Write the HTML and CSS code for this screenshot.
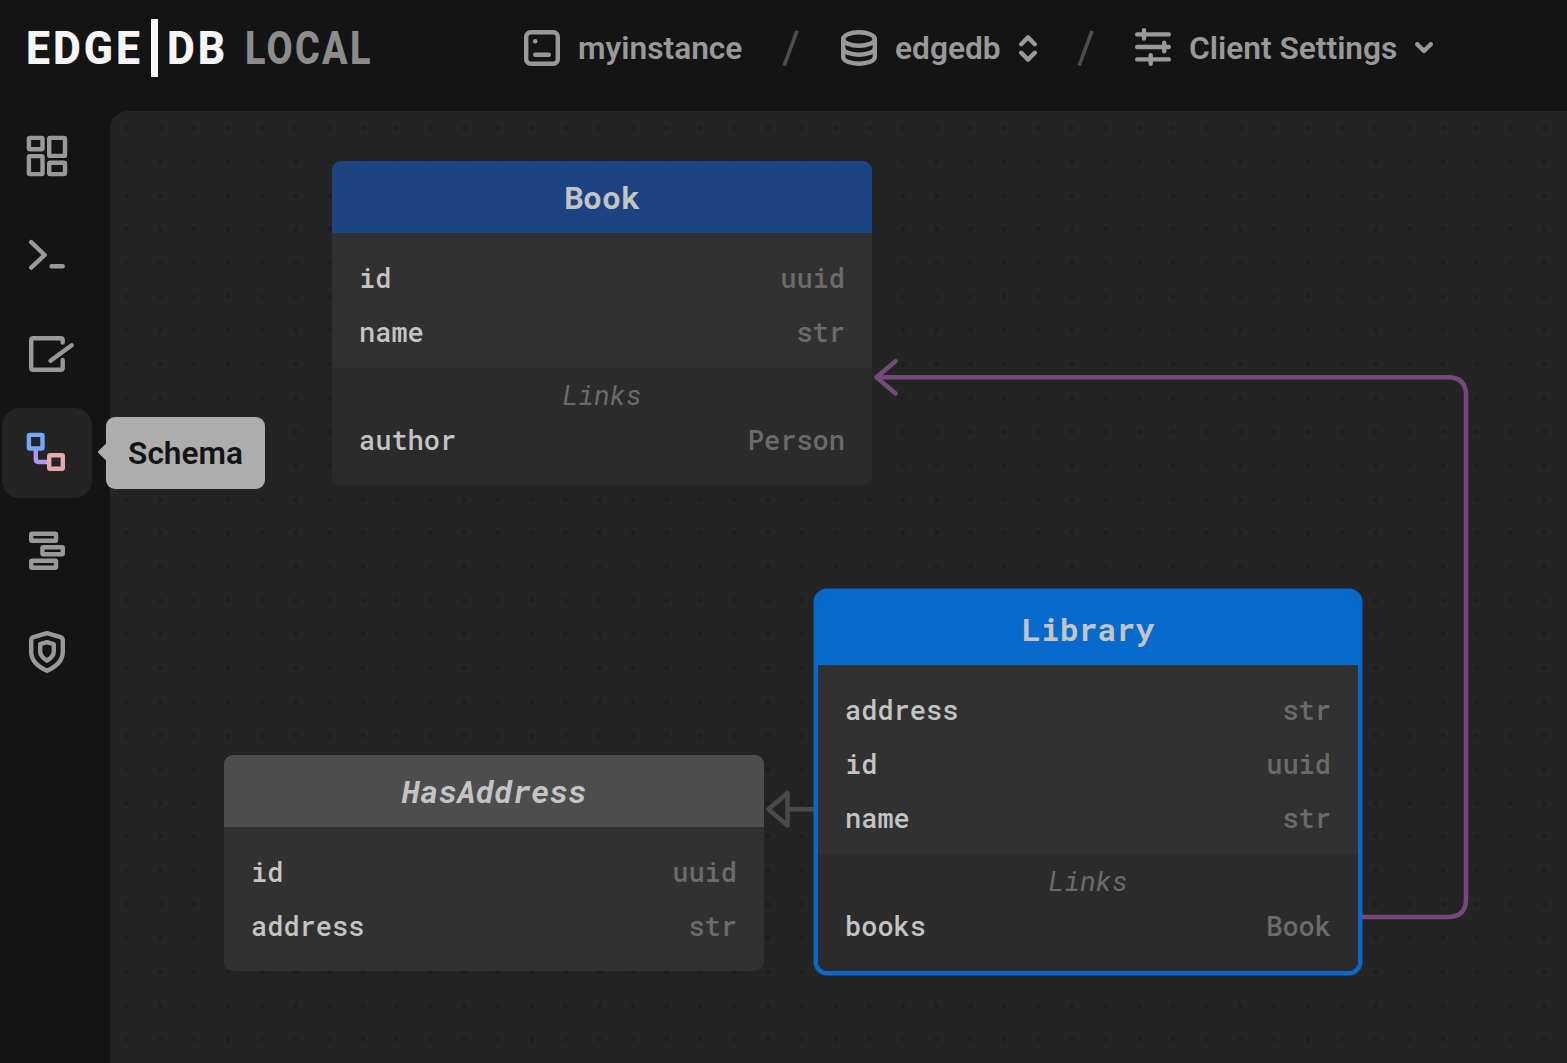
FILE: index.html
```html
<!DOCTYPE html>
<html lang="en">
<head>
<meta charset="utf-8">
<title>EdgeDB Local</title>
<link rel="stylesheet" href="styles.css">
</head>
<body>
<header class="topbar">
  <div class="logo">
    <span class="logo-word logo-edge">EDGE</span>
    <span class="logo-bar"></span>
    <span class="logo-word logo-db">DB</span>
    <span class="logo-word logo-local">LOCAL</span>
  </div>
  <nav class="crumbs">
    <div class="crumb crumb-instance">
      <svg class="icon" width="36" height="36" viewBox="0 0 36 36"><rect x="2.2" y="2.2" width="31.6" height="31.6" rx="4.5"/><circle class="solid" cx="11.2" cy="11.2" r="2.3"/><path d="M11.2 24.8H24.8"/></svg>
      <span class="crumb-label">myinstance</span>
    </div>
    <svg class="slash" width="18" height="36" viewBox="0 0 18 36"><path d="M2.2 35.5L15 .8"/></svg>
    <div class="crumb crumb-database">
      <svg class="icon" width="36" height="36" viewBox="0 0 36 36"><ellipse cx="18" cy="9" rx="15.8" ry="6.8"/><path d="M2.2 9V27C2.2 30.8 9.3 33.8 18 33.8S33.8 30.8 33.8 27V9M2.2 18C2.2 21.8 9.3 24.8 18 24.8S33.8 21.8 33.8 18"/></svg>
      <span class="crumb-label">edgedb</span>
      <svg class="icon" width="18" height="27" viewBox="0 0 18 27"><path d="M2.2 9.2L9 2.4L15.8 9.2M2.2 17.8L9 24.6L15.8 17.8"/></svg>
    </div>
    <svg class="slash" width="18" height="36" viewBox="0 0 18 36"><path d="M2.2 35.5L15 .8"/></svg>
    <div class="crumb crumb-settings">
      <svg class="icon icon-sliders" width="36" height="38" viewBox="0 0 36 38"><path d="M2.2 6.4H33.8M2.2 19H33.8M2.2 31.4H33.8M9 2.2V10.6M29.2 14.8V23.2M15.7 27.2V35.8"/></svg>
      <span class="crumb-label">Client Settings</span>
      <svg class="icon" width="18" height="12" viewBox="0 0 18 12"><path d="M2.2 2.2L9 9L15.8 2.2"/></svg>
    </div>
  </nav>
</header>
<div class="workspace">
  <nav class="sidebar">
    <a class="tab"><svg class="icon" width="90" height="90" viewBox="0 0 90 90"><rect x="26.9" y="26.9" width="13.6" height="11.4" rx="1"/><rect x="47.2" y="26.9" width="15.8" height="18" rx="1"/><rect x="26.9" y="45.1" width="13.6" height="18" rx="1"/><rect x="47.2" y="51.7" width="15.8" height="11.4" rx="1"/></svg></a>
    <a class="tab"><svg class="icon" width="90" height="90" viewBox="0 0 90 90"><path d="M29.2 32.2L42.7 45L29.2 57.6M49.6 56.2H60.7"/></svg></a>
    <a class="tab"><svg class="icon" width="90" height="90" viewBox="0 0 90 90"><path d="M60.7 33.5V31.3Q60.7 29.3 58.7 29.3H31.2Q29.2 29.3 29.2 31.3V58.7Q29.2 60.7 31.2 60.7H58.7Q60.7 60.7 60.7 58.7V51M48.5 51.8L69.7 36.2"/></svg></a>
    <a class="tab tab-active"><svg class="icon" width="90" height="90" viewBox="0 0 90 90"><path class="schema-link" d="M33.8 42V51Q33.8 54 36.8 54H46"/><rect class="schema-from" x="26.9" y="26.9" width="13.6" height="13.6" rx="1"/><rect class="schema-to" x="47.2" y="47.2" width="13.6" height="13.6" rx="1"/></svg><span class="tooltip">Schema</span></a>
    <a class="tab"><svg class="icon" width="90" height="90" viewBox="0 0 90 90"><rect x="29.2" y="26.8" width="24.8" height="7" rx=".8"/><rect x="40.4" y="40.3" width="20.4" height="7" rx=".8"/><rect x="29.2" y="53.8" width="24.8" height="7" rx=".8"/></svg></a>
    <a class="tab"><svg class="icon" width="90" height="90" viewBox="0 0 90 90"><path d="M45 27.2L58.5 31.2Q60.8 32 60.8 34.4V46C60.8 54 54.5 60.5 45 64.8C35.5 60.5 29.2 54 29.2 46V34.4Q29.2 32 31.5 31.2Z"/><path d="M45 36.1L51.8 38.2V45.5C51.8 49.4 49 52.2 45 54.6C41 52.2 38.2 49.4 38.2 45.5V38.2Z"/></svg></a>
  </nav>
  <main class="canvas">
    <svg class="canvas-layer" width="1457" height="952" viewBox="110 111 1457 952">
      <defs>
        <pattern id="grid" x="109.85" y="111.1" width="33.75" height="33.75" patternUnits="userSpaceOnUse"><path class="grid-dot" d="M16.9 13.7L20.1 16.9L16.9 20.1L13.7 16.9Z"/></pattern>
      </defs>
      <rect x="110" y="111" width="1457" height="952" fill="url(#grid)"/>
      <path class="edge edge-link" d="M1360 917H1448Q1466 917 1466 899V395.3Q1466 377.3 1448 377.3H877M895.5 361.2L876.5 377.3L895.5 393.5"/>
      <path class="edge edge-inherit" d="M816 809.3H788M768.5 809.3L787.5 793V825.6Z"/>
    </svg>
    <section class="node node-book">
      <h2 class="node-title">Book</h2>
      <dl class="props">
        <div class="row"><dt>id</dt><dd>uuid</dd></div>
        <div class="row"><dt>name</dt><dd>str</dd></div>
      </dl>
      <div class="links">
        <h3 class="links-title">Links</h3>
        <dl><div class="row"><dt>author</dt><dd>Person</dd></div></dl>
      </div>
    </section>
    <section class="node node-address">
      <h2 class="node-title">HasAddress</h2>
      <dl class="props">
        <div class="row"><dt>id</dt><dd>uuid</dd></div>
        <div class="row"><dt>address</dt><dd>str</dd></div>
      </dl>
    </section>
    <section class="node node-library">
      <h2 class="node-title">Library</h2>
      <dl class="props">
        <div class="row"><dt>address</dt><dd>str</dd></div>
        <div class="row"><dt>id</dt><dd>uuid</dd></div>
        <div class="row"><dt>name</dt><dd>str</dd></div>
      </dl>
      <div class="links">
        <h3 class="links-title">Links</h3>
        <dl><div class="row"><dt>books</dt><dd>Book</dd></div></dl>
      </div>
    </section>
  </main>
</div>
</body>
</html>
```

FILE: styles.css
```css
* { box-sizing: border-box; }

body {
  margin: 0;
  height: 1063px;
  display: flex;
  flex-direction: column;
  overflow: hidden;
  background: #141414;
  color: #999;
  font-family: Roboto, "Liberation Sans", sans-serif;
  font-weight: 600;
}

h2, h3, dl, dt, dd { margin: 0; font-weight: inherit; }
svg { display: block; flex: none; }

.icon {
  fill: none;
  stroke: #999;
  stroke-width: 4.4;
  stroke-linecap: round;
  stroke-linejoin: round;
}
.icon .solid { fill: #999; stroke: none; }

/* Top bar */
.topbar { display: flex; height: 111px; flex: none; }

.logo { display: flex; align-items: center; width: 524px; height: 96px; padding-left: 24px; }
.logo-word {
  padding-top: 2px;
  font-size: 45.5px;
  line-height: 54px;
  font-weight: 800;
  letter-spacing: 3.2px;
  color: #f7f7f7;
  transform: scaleX(.94);
  transform-origin: left center;
}
.logo-edge { width: 125.5px; margin-left: 1.5px; }
.logo-bar { width: 7px; height: 58px; background: #f7f7f7; }
.logo-db { width: 78px; margin-left: 9px; }
.logo-local { color: #8c8c8c; letter-spacing: 2.8px; transform: scaleX(.83); }

.crumbs { display: flex; align-items: center; height: 96px; }
.crumb { display: flex; align-items: center; gap: 18px; }
.crumb-instance { width: 258px; }
.crumb-database { width: 236px; margin-left: 41px; }
.crumb-settings { margin-left: 40px; }
.crumb-label { padding-top: 2px; font-size: 31.7px; line-height: 38px; }
.icon-sliders { margin-top: -2px; }
.slash { fill: none; stroke: #4d4d4d; stroke-width: 3.6; }

/* Sidebar */
.workspace { display: flex; flex: 1; min-height: 0; }
.sidebar { display: flex; flex-direction: column; gap: 9px; width: 110px; padding-left: 2px; flex: none; }
.tab { position: relative; width: 90px; height: 90px; border-radius: 18px; }
.tab-active { background: #242424; z-index: 2; }
.schema-from { stroke: #74a6fb; }
.schema-link { stroke: #b496ef; }
.schema-to { stroke: #e8aaa6; }

.tooltip {
  position: absolute;
  left: 104px;
  top: 9px;
  width: 159px;
  height: 72px;
  border-radius: 9px;
  background: #adadad;
  color: #141414;
  font-size: 31.6px;
  line-height: 74px;
  text-align: center;
}
.tooltip::before {
  content: "";
  position: absolute;
  left: -8.5px;
  top: 26px;
  width: 9px;
  height: 18px;
  background: #adadad;
  clip-path: polygon(100% 0, 0 50%, 100% 100%);
}

/* Schema graph */
.canvas {
  position: relative;
  flex: 1;
  overflow: hidden;
  border-top-left-radius: 18px;
  background: #242424;
}
.canvas-layer { position: absolute; left: 0; top: 0; }
.grid-dot { fill: #1d1d1d; }
.edge { fill: none; stroke-width: 4.5; stroke-linecap: round; stroke-linejoin: round; }
.edge-link { stroke: #744a7a; }
.edge-inherit { stroke: #4a4a4a; }

.node {
  position: absolute;
  width: 540px;
  border-radius: 9px;
  background: #313131;
  font-family: "Roboto Mono", "DejaVu Sans Mono", monospace;
  font-size: 27px;
  font-weight: 500;
  color: #c4c4c4;
}
.node-book { left: 222px; top: 50.4px; }
.node-address { left: 114px; top: 644.4px; }
.node-library { left: 708px; top: 482.4px; box-shadow: 0 0 0 4.5px #056acb; }

.node-title {
  height: 72px;
  border-radius: 9px 9px 0 0;
  font-size: 31.5px;
  line-height: 72px;
  font-weight: 700;
  text-align: center;
}
.node-book .node-title { background: #1c4483; }
.node-library .node-title { background: #056acb; }
.node-address .node-title { background: #4d4d4d; font-style: italic; }

.props { padding: 18px 0 9px; }
.node-address .props { padding-bottom: 18px; }
.row { display: flex; justify-content: space-between; height: 54px; padding: 0 27px; line-height: 54px; }
.row dd { color: #6b6b6b; }
.links { padding: 9px 0 18px; border-radius: 0 0 9px 9px; background: #2b2b2b; }
.links-title { height: 36px; line-height: 36px; font-size: 27px; font-weight: 400; font-style: italic; color: #6b6b6b; text-align: center; }
```
